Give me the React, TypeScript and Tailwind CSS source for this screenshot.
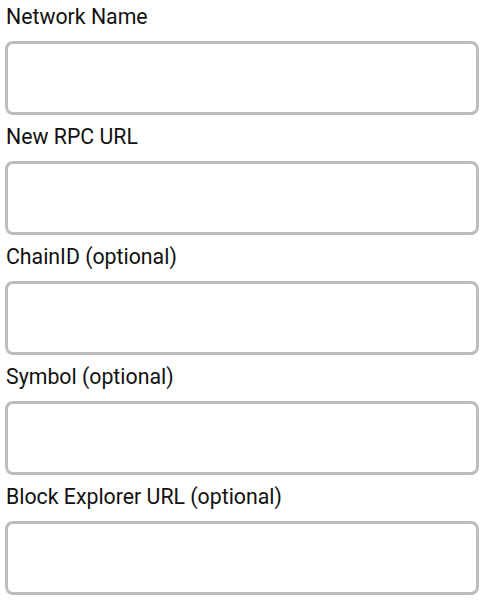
import React from "react";

const fields = [
  "Network Name",
  "New RPC URL",
  "ChainID (optional)",
  "Symbol (optional)",
  "Block Explorer URL (optional)",
];

export default function App() {
  return (
    <div className="w-[487px] h-[607px] bg-white px-[5px] pr-[8px]" style={{ fontFamily: "Roboto, sans-serif" }}>
      {fields.map((label) => (
        <div key={label} className="flex flex-col">
          <label className="h-[41px] pt-[5px] pl-[1px] text-[21.3px] leading-[24px] text-[#111]">{label}</label>
          <input
            type="text"
            className="h-[74px] mb-[5px] w-full rounded-[8px] border-[3px] border-[#babec2] bg-white outline-none"
          />
        </div>
      ))}
    </div>
  );
}
